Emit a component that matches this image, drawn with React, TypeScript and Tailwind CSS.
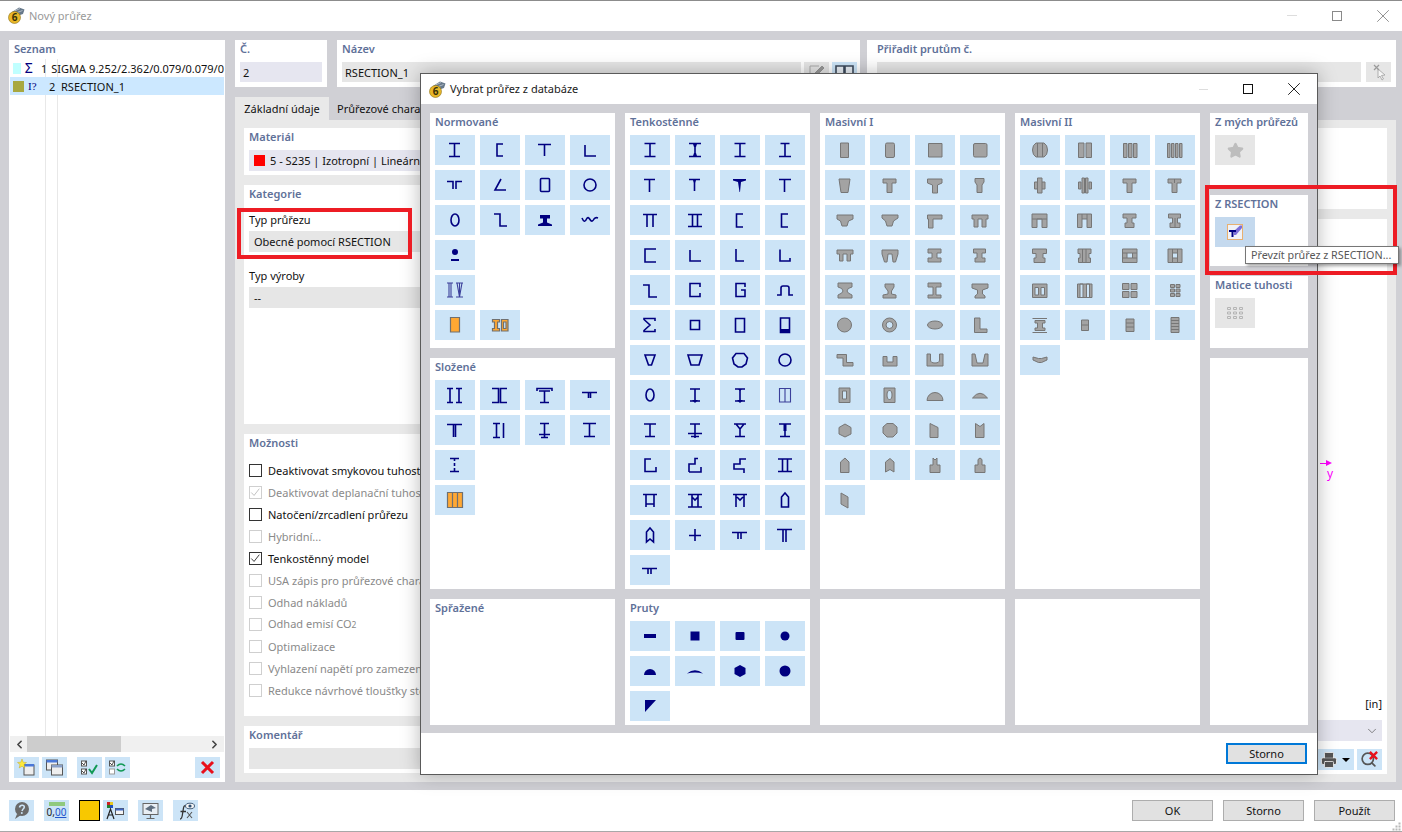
import type { ReactNode } from 'react';
import { ChevronDown, ChevronLeft, ChevronRight, Printer, Search, Star, X } from 'lucide-react';

type Kind = 'n' | 'f' | 'g' | 'o' | 'l';
type Shape = [Kind, string];

const n = (d: string): Shape => ['n', d];
const f = (d: string): Shape => ['f', d];
const g = (d: string): Shape => ['g', d];
const o = (d: string): Shape => ['o', d];
const l = (d: string): Shape => ['l', d];

const circle = (cx: number, cy: number, rx: number, ry = rx) =>
  `M${cx - rx} ${cy}a${rx} ${ry} 0 1 0 ${rx * 2} 0a${rx} ${ry} 0 1 0 ${-rx * 2} 0Z`;

const normovane: Shape[][] = [
  [n('M14 8.5H25M14 21.5H25M19.5 8.5V21.5')],
  [n('M23 9H17V21H23')],
  [n('M13 9.5H26M19.5 9.5V21')],
  [n('M15 10V21H26')],
  [n('M12 11.5H18V19M21 19V11.5H27')],
  [n('M21 9L15 20H26')],
  [n('M16.5 8.5H23.5Q24.5 8.5 24.5 9.5V20.5Q24.5 21.5 23.5 21.5H16.5Q15.5 21.5 15.5 20.5V9.5Q15.5 8.5 16.5 8.5Z')],
  [n(circle(20, 15, 6))],
  [n(circle(20, 15, 4, 6))],
  [n('M14 9H20V21H27')],
  [f('M15 10H25V13.5H22V17.5L27 19.5V21H13V19.5L18 17.5V13.5H15Z')],
  [n('M12 13Q14.5 19 16.5 14Q18 11 20 14.5Q22 18 24 14Q25.5 12 28 13')],
  [f(`${circle(20, 12, 3)}M16 19H24V21H16Z`)],
  [],
  [],
  [],
  [l('M12 8H18M12 22H18M14 8V22M16 8V22M21 8H28M21 22H28M22 8L24.5 22L27 8M24.5 8V22')],
  [],
  [],
  [],
  [o('M15.5 7.5H24.5V22H15.5Z')],
  [o('M12.5 9.5H19.5V12H17.5V18.5H19.5V21H12.5V18.5H14.5V12H12.5ZM21.5 9.5H28V21H21.5ZM23.5 12V18.5H26V12Z')],
];

const slozene: Shape[][] = [
  [n('M12 8.5H18M12 22.5H18M15 8.5V22.5M21 8.5H27M21 22.5H27M24 8.5V22.5')],
  [n('M12 8.5H18.5V22.5H12M27 8.5H20.5V22.5H27')],
  [n('M12 11V8.5H27V11M14 11H25M19.5 11V22.5M15 22.5H24')],
  [n('M12 12.5H27M18.5 12.5V18M20.5 12.5V18')],
  [n('M12 9.5H27M18.5 9.5V22M20.5 9.5V22')],
  [n('M13 8.5H20M13 22.5H20M16.5 8.5V22.5M23.5 8V23')],
  [n('M15 8.5H24M19.5 8.5V22.5M14 19.5H25M16 22.5H23')],
  [n('M13 8.5H26M19.5 8.5V21.5M14 21.5H25')],
  [n('M15 8.5H24M15 21.5H24M19.5 8.5V11M19.5 13V16M19.5 18V21.5')],
  [],
  [],
  [],
  [o('M12.5 7.5H27.5V22.5H12.5ZM17.5 7.5V22.5M22.5 7.5V22.5')],
];

const tenkostenne: Shape[][] = [
  [n('M14.5 8.5H25.5M14.5 21.5H25.5M20 8.5V21.5')],
  [n('M14 8.5H26M14 21.5H26M20 8.5V21.5'), f('M18 9H22L21 12H19ZM19 18H21L22 21H18Z')],
  [n('M14.5 8.5H25.5M14.5 21.5H25.5M20 8.5V21.5')],
  [n('M15.5 8.5H24.5M14 21.5H26M20 8.5V21.5')],
  [n('M14 9.5H25M19.5 9.5V22')],
  [n('M14 9.5H25M19.5 9.5V21'), f('M18 10H21L20 13H19Z')],
  [f('M13 9H26V10.5L21 12L20 22H19.5L18 12L13 10.5Z')],
  [n('M14 9.5H26M19.5 9.5V22')],
  [n('M13 9.5H27M17 9.5V22M23 9.5V22')],
  [n('M13 9.5H27M13 21.5H27M17.5 9.5V21.5M22.5 9.5V21.5')],
  [n('M23 9H16.5V22H23')],
  [n('M23 9H16.5V22H23')],
  [n('M26 9H15V22H26')],
  [n('M15 10V21H26')],
  [n('M16 9V21H24')],
  [n('M15 9.5V21H25V18')],
  [n('M13 10H19V22H27')],
  [n('M25 12V8.5H15V21.5H25V18')],
  [n('M25 12V8.5H16V21.5H25V15H21')],
  [n('M12 20H16V13Q16 11 18 11H22Q24 11 24 13V20H28')],
  [n('M25 11V8.5H14V9.5L20 15L14 20.5V21.5H25V19')],
  [n('M15.5 10.5H24.5V19.5H15.5Z')],
  [n('M15.5 8.5H24.5V22H15.5Z')],
  [n('M15.5 8H24.5V22.5H15.5Z'), f('M15 19H25V23H15Z')],
  [n('M15 10H25L21.5 20H18.5Z')],
  [n('M13 10H27L24 20H16Z')],
  [n('M16 8.5H24L27.5 13L26 19L22 22H18L14 19L12.5 13Z')],
  [n(circle(20, 15, 6))],
  [n(circle(20, 15, 4, 6))],
  [n('M15 9H25M15 21H25M20 9V21'), f('M17 20H23L20 23Z')],
  [n('M15 9H25M15 21H25M20 9V21'), f('M18 9H22L20 11ZM17 20H23L20 23Z')],
  [l('M14.5 8.5H25.5V22H14.5ZM20 8.5V22')],
  [n('M14 9H26M20 9V21.5M15 21.5H25')],
  [n('M15 9H25M20 9V23M13 18.5H27M16 21.5H24')],
  [n('M14 9H26M16 9L20 14L24 9M20 14V21.5M15 21.5H25')],
  [n('M14 9H26M20 9V21.5M15 21.5H25'), f('M18.5 9H21.5V16H18.5Z')],
  [n('M21 9H15V21.5H26V17')],
  [n('M14 22H26V17M14 22V14H20V8.5H23')],
  [n('M26 9H20V14H14V19H24V23')],
  [n('M13 9H27M13 21.5H27M17.5 9V21.5M22.5 9V21.5')],
  [n('M13 9.5H27M16 9.5V22M24 9.5V22M16 19H24')],
  [n('M13 9.5H27M13 22H27M17 9.5V22M23 9.5V22M17 12L20 15L23 12')],
  [n('M13 9.5H27M16 9.5V22M24 9.5V22M17 12L20 15L23 12')],
  [n('M16.5 22V12L20 8L23.5 12V22Z')],
  [n('M16.5 22V12L20 8L23.5 12V22L20 19Z')],
  [n('M14 15.5H26M20 9V21')],
  [n('M12 12.5H27M18 12.5V19M21 12.5V19')],
  [n('M12 9.5H27M18 9.5V22M21 9.5V22')],
  [n('M12 13.5H27M18 13.5V19M21 13.5V19')],
];

const pruty: Shape[][] = [
  [f('M14 13H26V17H14Z')],
  [f('M15.5 10.5H24.5V19.5H15.5Z')],
  [f('M16.5 11H23.5Q24.5 11 24.5 12V18Q24.5 19 23.5 19H16.5Q15.5 19 15.5 18V12Q15.5 11 16.5 11Z')],
  [f(circle(20, 15, 4.5))],
  [f('M14 19A6 6 0 0 1 26 19Z')],
  [f('M12 17.5Q20 11 28 17.5Q20 15.5 12 17.5Z')],
  [f('M20 9L25.5 12V18L20 21L14.5 18V12Z')],
  [f(circle(20, 15, 5.5))],
  [f('M15 9H26L15 21Z')],
];

const masivniI: Shape[][] = [
  [g('M15.5 8H23.5V22.5H15.5Z')],
  [g('M17 8H23Q24.5 8 24.5 9.5V21Q24.5 22.5 23 22.5H17Q15.5 22.5 15.5 21V9.5Q15.5 8 17 8Z')],
  [g('M13.5 8.5H27V22H13.5Z')],
  [g('M15 8.5H25.5Q27 8.5 27 10V20.5Q27 22 25.5 22H15Q13.5 22 13.5 20.5V10Q13.5 8.5 15 8.5Z')],
  [g('M14 9H25L23 22.5H16Z')],
  [g('M13 9H26V13H22V22.5H17V13H13Z')],
  [g('M12.5 9H27V13L22.5 15V23H17.5V15L12.5 13Z')],
  [g('M15 8.5H24V12L22 15V22.5H17V15L15 12Z')],
  [g('M12 10H28V14L23.5 16L22 21H17L15.5 16L12 14Z')],
  [g('M12 10H28V13L23.5 16L22 21H17L15.5 16L12 13Z')],
  [g('M12.5 10H27V14H18V23H13.5V14H12.5Z')],
  [g('M12 10H28V14H26V22H22V14H18V22H14V14H12Z')],
  [g('M12 10H28V14H25.5V21H22V14H18V21H14.5V14H12Z')],
  [g('M12 10H28V14L25.5 22H23L22 14H18L17 22H14.5L12 14Z')],
  [g('M13 9H26V13H22V18H26V22H13V18H17V13H13Z')],
  [g('M13.5 9H25.5V13H22V18H25V22H15V18H17V13H13.5Z')],
  [g('M13 8H27V12Q22 13 22 16Q22 18 27 20V23H13V20Q18 18 18 16Q18 13 13 12Z')],
  [g('M15 9H24V12L21.5 16V19L26 20V23H13V20L18 19V16L15 12Z')],
  [g('M13 8H26V12H21V20H26V23H13V20H18V12H13Z')],
  [g('M12 9H28V13L22.5 15V19L25 21V23H15V21L17.5 19V15L12 13Z')],
  [g(circle(19.5, 15, 7))],
  [g(`${circle(19.5, 15, 7)}${circle(19.5, 15, 3.5)}`)],
  [g(circle(20, 15, 7.5, 4))],
  [g('M14.5 8H20V19H27V22.5H14.5Z')],
  [g('M12 9.5H21.5V17.5H28V21H18V13H12Z')],
  [g('M13 11.5H17V17H23V11.5H27V21H13Z')],
  [g('M12 9H15.5V15Q15.5 18 20 18Q24.5 18 24.5 15V9H28V21H12Z')],
  [g('M12 9H15L17 18H23L25 9H28V21H12Z')],
  [g('M14 8H25V22.5H14ZM17.5 11V19H21.5V11Z')],
  [g(`M14 8H25V22.5H14Z${circle(19.5, 15, 2.5, 4.5)}`)],
  [g('M12 20.5A8 8 0 0 1 28 20.5Z')],
  [g('M12.5 18Q20 8.5 27.5 18Z')],
  [g('M20 9L26 12.5V19L20 22L14 19V12.5Z')],
  [g('M17 8.5H23L27 12V18L23 22H17L13 18V12Z')],
  [g('M15 8.5L23 12.5V22.5H15Z')],
  [g('M15.5 8.5L20 11.5L24 8.5V22.5H15.5Z')],
  [g('M15.5 22.5V12L20 8L24 12V22.5Z')],
  [g('M15.5 22V12L20 8.5L24 12V22L20 19.5Z')],
  [g('M15 22.5V15H18V8L20 10L22 8V15H25V22.5Z')],
  [g('M15 22.5V15H18V9.5L20 8L22 9.5V15H25V22.5Z')],
  [g('M16 8L23 12V23L16 19Z')],
];

const masivniII: Shape[][] = [
  [g('M16 8H24Q27.5 10 27.5 15Q27.5 20 24 22H16Q12.5 20 12.5 15Q12.5 10 16 8ZM17.5 8V22M22.5 8V22')],
  [g('M13.5 8H19V22.5H13.5ZM21 8H26.5V22.5H21Z')],
  [g('M13.5 8.5H17V22.5H13.5ZM18.5 8.5H22V22.5H18.5ZM23.5 8.5H27V22.5H23.5Z')],
  [g('M12.5 8.5H15V22.5H12.5ZM16.5 8.5H19V22.5H16.5ZM20.5 8.5H23V22.5H20.5ZM24.5 8.5H27V22.5H24.5Z')],
  [g('M17.5 8H22V12H25V19H22V23H17.5V19H14.5V12H17.5ZM17.5 12V19M22 12V19')],
  [g('M17 8H19.5V23H17ZM20.5 8H23V23H20.5ZM13.5 12H16V19H13.5ZM24 12H26.5V19H24Z')],
  [g('M13 9H26V13H22V22.5H17V13H13Z')],
  [g('M13 9H26V13H22V22.5H17V13H13ZM19.5 9V13')],
  [g('M12 9H27V22.5H22V14H17V22.5H12ZM12 14H27')],
  [g('M12.5 9H26.5V22.5H22V14H17V22.5H12.5ZM17 9V14M22 9V14')],
  [g('M13 9H26V13H22V18H24V22.5H15V18H17V13H13Z')],
  [g('M13.5 9H25.5V13H22.5V18H25V22.5H15V18H17.5V13H13.5ZM20 13V22.5')],
  [g('M12.5 9H26.5V13.5H23V18H25V22.5H14V18H16V13.5H12.5Z')],
  [g('M13 9H26V13.5H24V18H25.5V22.5H13.5V18H15V13.5H13ZM17.5 9V22.5M21 9V22.5')],
  [g('M12.5 9H27V22.5H12.5ZM17 13H22.5V18H17ZM12.5 13H17M22.5 13H27M12.5 18H17M22.5 18H27')],
  [g('M13 9H27V22.5H13ZM17.5 13H22.5V18H17.5ZM17.5 9V22.5M22.5 9V22.5')],
  [g('M12.5 9H27V22.5H12.5ZM15 12.5V20H18.5V12.5ZM21 12.5V20H24.5V12.5Z')],
  [g('M12.5 9H27V22.5H12.5ZM15 9V22.5H18V9ZM21.5 9V22.5H24.5V9Z')],
  [g('M12.5 8.5H19V14.5H12.5ZM21 8.5H27V14.5H21ZM12.5 16.5H19V22.5H12.5ZM21 16.5H27V22.5H21Z')],
  [g('M15.5 9.5H19.5V12.5H15.5ZM21 9.5H25V12.5H21ZM15.5 14H19.5V17H15.5ZM21 14H25V17H21ZM15.5 18.5H19.5V21.5H15.5ZM21 18.5H25V21.5H21Z')],
  [g('M12.5 8.5H27M12.5 22.5H27M15 10.5H25V13H22.5V18H25V20.5H15V18H17.5V13H15Z')],
  [g('M16.5 10H23.5V20.5H16.5ZM16.5 15H23.5')],
  [g('M16 9H24V21.5H16ZM16 13H24M16 17H24')],
  [g('M16 7.5H24V22.5H16ZM16 10.5H24M16 13.5H24M16 16.5H24M16 19.5H24')],
  [g('M13 12L18.5 13.5H21.5L27 12V15L21.5 17.5H18.5L13 15Z')],
];

function Icon({ shapes }: { shapes: Shape[] }) {
  return (
    <svg viewBox="0 0 40 30" className="h-[30px] w-[40px]">
      {shapes.map(([kind, d], i) => {
        if (kind === 'n') return <path key={i} d={d} fill="none" stroke="#000080" strokeWidth={1.6} />;
        if (kind === 'l') return <path key={i} d={d} fill="none" stroke="#3a3f9a" strokeWidth={1.1} />;
        if (kind === 'f') return <path key={i} d={d} fill="#000080" />;
        if (kind === 'o') return <path key={i} d={d} fill="#ffa833" stroke="#707070" strokeWidth={1.2} fillRule="evenodd" />;
        return <path key={i} d={d} fill="#a3a3a3" stroke="#767676" strokeWidth={1} fillRule="evenodd" />;
      })}
    </svg>
  );
}

function Grid({ items }: { items: Shape[][] }) {
  return (
    <div className="grid grid-cols-[repeat(4,40px)] gap-[5px] pl-[5px]">
      {items.map((shapes, i) =>
        shapes.length ? (
          <div key={i} className="h-[30px] w-[40px] bg-[#cce4f7]">
            <Icon shapes={shapes} />
          </div>
        ) : (
          <div key={i} className="h-[30px] w-[40px]" />
        ),
      )}
    </div>
  );
}

function Heading({ children }: { children: ReactNode }) {
  return (
    <div className="flex h-[22px] items-center px-[5px] pb-[5px] text-[11px] leading-none font-semibold whitespace-nowrap text-[#5f7199]">
      {children}
    </div>
  );
}

function Panel({ title, className, children }: { title?: string; className: string; children?: ReactNode }) {
  return (
    <div className={`bg-white ${className}`}>
      {title && <Heading>{title}</Heading>}
      {children}
    </div>
  );
}

function Logo() {
  return (
    <svg viewBox="0 0 17 17" className="h-[17px] w-[17px] shrink-0">
      <path d="M4 5L11 0.5L16.5 2.5L15 7L9 9Z" fill="#66788a" />
      <path d="M6.5 4L12 1.5M8 6L14.5 3.5" stroke="#c3ccd4" strokeWidth={0.8} />
      <circle cx="6.5" cy="10.5" r="6" fill="#e9b728" stroke="#8a7018" strokeWidth={0.6} />
      <text x="6.5" y="14.2" textAnchor="middle" fontSize="10" fontWeight="700" fill="#3a3208">
        6
      </text>
    </svg>
  );
}

function Check({ on, disabled, label }: { on?: boolean; disabled?: boolean; label: ReactNode }) {
  return (
    <div className="flex h-[22px] items-center whitespace-nowrap">
      <span
        className={`mr-[6px] flex h-[13px] w-[13px] shrink-0 items-center justify-center border bg-white ${
          disabled ? 'border-[#cfcfcf]' : 'border-[#333333]'
        }`}
      >
        {on && (
          <svg viewBox="0 0 13 13" className="h-[11px] w-[11px]">
            <path d="M1.5 6.5L4.8 10L11 2" fill="none" stroke={disabled ? '#bdbdbd' : '#333333'} strokeWidth={1.1} />
          </svg>
        )}
      </span>
      <span className={disabled ? 'text-[#8a8a8a]' : 'text-[#111111]'}>{label}</span>
    </div>
  );
}

function ToolButton({ className = '', children }: { className?: string; children?: ReactNode }) {
  return <div className={`flex h-[21px] w-[25px] items-center justify-center bg-[#cce4f7] ${className}`}>{children}</div>;
}

function WinButton({ children }: { children: ReactNode }) {
  return (
    <div className="flex h-[21px] w-[81px] items-center justify-center border border-[#adadad] bg-[#e1e1e1] text-[#111111]">
      {children}
    </div>
  );
}

function RedBox({ className }: { className: string }) {
  return <div className={`absolute border-[4px] border-[#ed1c24] ${className}`} />;
}

const options = [
  { label: 'Deaktivovat smykovou tuhost' },
  { label: 'Deaktivovat deplanační tuhost', on: true, disabled: true },
  { label: 'Natočení/zrcadlení průřezu' },
  { label: 'Hybridní...', disabled: true },
  { label: 'Tenkostěnný model', on: true },
  { label: 'USA zápis pro průřezové charakteristiky', disabled: true },
  { label: 'Odhad nákladů', disabled: true },
  {
    label: (
      <>
        Odhad emisí CO<span className="text-[8.5px]">2</span>
      </>
    ),
    disabled: true,
  },
  { label: 'Optimalizace', disabled: true },
  { label: 'Vyhlazení napětí pro zamezení singularit', disabled: true },
  { label: 'Redukce návrhové tloušťky stěny', disabled: true },
];

export default function App() {
  return (
    <div className="relative flex h-[832px] w-[1402px] flex-col overflow-hidden bg-white text-[11px] leading-none text-[#111111] [font-family:'Noto_Sans',sans-serif]">
      {/* Title bar */}
      <div className="flex h-[31px] shrink-0 items-center border-t border-[#8c8c8c] pb-[1px] pl-[8px]">
        <Logo />
        <span className="ml-[4px] pb-[1px] text-[#999999]">Nový průřez</span>
        <div className="ml-auto flex items-center pr-[8px]">
          <div className="mr-[35px] h-px w-[10px] bg-[#dddddd]" />
          <div className="mr-[30px] h-[10px] w-[10px] border border-[#8a8a8a]" />
          <X className="h-[22px] w-[22px] text-[#8a8a8a]" strokeWidth={1} />
        </div>
      </div>

      {/* Main body */}
      <div className="flex min-h-0 flex-1 gap-[10px] bg-[#d0d0d5] pt-[9px] pr-[6px] pb-[8px] pl-[9px]">
        <div className="flex w-[216px] shrink-0 flex-col bg-white">
          <Heading>Seznam</Heading>
          <div className="relative mx-px -mt-[3px] flex min-h-0 flex-1 flex-col">
            <div className="absolute top-0 bottom-0 left-[35px] w-px bg-[#e8e8e8]" />
            <div className="absolute top-0 bottom-0 left-[47px] w-px bg-[#e8e8e8]" />
            <div className="relative flex h-[18px] items-center">
              <span className="ml-[3px] h-[11px] w-[11px] bg-[#c0ffff]" />
              <span className="ml-[4px] w-[17px] text-[14px] text-[#000080]">Σ</span>
              <span className="ml-[4px] w-[8px]">1</span>
              <span className="ml-[4px] whitespace-nowrap">SIGMA 9.252/2.362/0.079/0.079/0</span>
            </div>
            <div className="relative flex h-[18px] items-center bg-[#cce8ff]">
              <span className="ml-[3px] h-[11px] w-[11px] bg-[#a8a840]" />
              <span className="ml-[4px] w-[17px] text-[11px] text-[#000080] [font-family:'Liberation_Serif',serif]">I?</span>
              <span className="ml-[4px] w-[8px]">2</span>
              <span className="ml-[4px] whitespace-nowrap">RSECTION_1</span>
            </div>
          </div>
          <div className="mx-px flex h-[16px] items-center bg-[#f0f0f0]">
            <ChevronLeft className="ml-[3px] h-[13px] w-[13px] text-[#444444]" strokeWidth={3} />
            <div className="ml-[1px] h-full w-[94px] bg-[#cdcdcd]" />
            <ChevronRight className="mr-[3px] ml-auto h-[13px] w-[13px] text-[#444444]" strokeWidth={3} />
          </div>
          <div className="flex h-[30px] items-center pl-[5px]">
            <ToolButton>
              <svg viewBox="0 0 25 21" className="h-[21px] w-[25px]">
                <rect x="10" y="8" width="10" height="10" fill="#eeeeee" stroke="#555555" />
                <rect x="10" y="7" width="10" height="2.5" fill="#4a78d8" />
                <path d="M8 2L9.2 5.2L12.5 5.5L10 7.6L10.8 11L8 9.2L5.2 11L6 7.6L3.5 5.5L6.8 5.2Z" fill="#ffe93b" stroke="#b59a10" strokeWidth={0.4} />
              </svg>
            </ToolButton>
            <ToolButton className="ml-[3px]">
              <svg viewBox="0 0 25 21" className="h-[21px] w-[25px]">
                <rect x="4.5" y="3" width="11" height="10" fill="#eeeeee" stroke="#555555" />
                <rect x="9.5" y="8" width="11" height="10" fill="#eeeeee" stroke="#555555" />
                <rect x="4.5" y="3" width="11" height="2.5" fill="#4a78d8" />
                <rect x="9.5" y="8" width="11" height="2.5" fill="#8aa0c8" />
              </svg>
            </ToolButton>
            <ToolButton className="ml-[10px]">
              <svg viewBox="0 0 25 21" className="h-[21px] w-[25px]">
                <rect x="4.5" y="4" width="5" height="5" fill="#fff" stroke="#555555" />
                <rect x="4.5" y="12" width="5" height="5" fill="#fff" stroke="#555555" />
                <path d="M5 6L7 8L9 4M5 14L7 16L9 12" fill="none" stroke="#222222" strokeWidth={0.8} />
                <path d="M12 12L15 16L20 8" fill="none" stroke="#119955" strokeWidth={2} />
              </svg>
            </ToolButton>
            <ToolButton className="ml-[3px]">
              <svg viewBox="0 0 25 21" className="h-[21px] w-[25px]">
                <rect x="4.5" y="4" width="5" height="5" fill="#fff" stroke="#555555" />
                <rect x="4.5" y="12" width="5" height="5" fill="#fff" stroke="#999999" />
                <path d="M5 6L7 8L9 4" fill="none" stroke="#222222" strokeWidth={0.8} />
                <path d="M12 9Q16 5 20 9M20 12Q16 16 12 12" fill="none" stroke="#119955" strokeWidth={1.6} />
              </svg>
            </ToolButton>
            <ToolButton className="ml-[65px]">
              <svg viewBox="0 0 25 21" className="h-[21px] w-[25px]">
                <path d="M7 5L18 16M18 5L7 16" stroke="#e8101c" strokeWidth={3} />
              </svg>
            </ToolButton>
          </div>
        </div>

        <div className="flex min-w-0 flex-1 flex-col">
          <div className="flex h-[47px] shrink-0">
            <div className="w-[92px] bg-white">
              <Heading>Č.</Heading>
              <div className="mx-[5px] flex h-[20px] items-center bg-[#e6e6f0] pl-[3px]">2</div>
            </div>
            <div className="ml-[10px] w-[523px] bg-white">
              <Heading>Název</Heading>
              <div className="flex pr-[3px] pl-[5px]">
                <div className="flex h-[20px] flex-1 items-center bg-[#e6e6e6] pl-[3px]">RSECTION_1</div>
                <div className="ml-[3px] flex h-[20px] w-[25px] items-center justify-center bg-[#e6e6e6]">
                  <svg viewBox="0 0 25 20" className="h-[20px] w-[25px]">
                    <path d="M6 4H15M6 4V17H15" fill="none" stroke="#aaaaaa" />
                    <path d="M9 13L18 4L20 6L11 15Z" fill="#9a9a9a" stroke="#777777" strokeWidth={0.6} />
                  </svg>
                </div>
                <div className="ml-[3px] flex h-[20px] w-[25px] items-center justify-center bg-[#cce4f7]">
                  <svg viewBox="0 0 25 20" className="h-[20px] w-[25px]">
                    <path d="M4 4H12V16H4ZM13 4H21V16H13Z" fill="#e8eef4" stroke="#3c4a5c" strokeWidth={1.6} />
                  </svg>
                </div>
              </div>
            </div>
            <div className="ml-[7px] flex-1 bg-white">
              <Heading>
                <span className="pl-[5px]">Přiřadit prutům č.</span>
              </Heading>
              <div className="flex pr-[5px] pl-[10px]">
                <div className="h-[20px] flex-1 bg-[#e6e6e6]" />
                <div className="ml-[5px] flex h-[20px] w-[25px] items-center justify-center bg-[#e6e6e6]">
                  <svg viewBox="0 0 25 20" className="h-[20px] w-[25px]">
                    <path d="M12 7L19 13L15.5 13.5L17.5 17L16 18L14 14L12 16Z" fill="#f5f5f5" stroke="#a0a0a0" strokeWidth={0.8} />
                    <path d="M8 3L13 8M13 3L8 8" stroke="#9a9a9a" strokeWidth={1.2} />
                  </svg>
                </div>
              </div>
            </div>
          </div>

          <div className="mt-[10px] flex h-[23px] shrink-0">
            <div className="flex w-[94px] items-center justify-center bg-[#e9e9e9]">Základní údaje</div>
            <div className="flex items-center pl-[8px] whitespace-nowrap">Průřezové charakteristiky</div>
          </div>

          <div className="flex min-h-0 flex-1 gap-[10px] bg-[#e9e9e9] px-[9px] py-[8px]">
            <div className="flex w-[556px] shrink-0 flex-col gap-[10px]">
              <Panel title="Materiál" className="h-[47px]">
                <div className="mx-[5px] flex h-[21px] items-center bg-[#e6e6f0] pl-[5px]">
                  <span className="mr-[5px] h-[11px] w-[11px] bg-[#ff0000]" />
                  5 - S235 | Izotropní | Lineárně elastický
                </div>
              </Panel>
              <Panel title="Kategorie" className="h-[239px]">
                <div className="px-[5px]">
                  <div className="mt-[6px] flex h-[13px] items-center">Typ průřezu</div>
                  <div className="mt-[5px] flex h-[21px] items-center bg-[#e6e6e6] pl-[5px]">Obecné pomocí RSECTION</div>
                  <div className="mt-[17px] flex h-[13px] items-center">Typ výroby</div>
                  <div className="mt-[5px] flex h-[21px] items-center bg-[#e6e6e6] pl-[5px]">--</div>
                </div>
              </Panel>
              <Panel title="Možnosti" className="h-[282px]">
                <div className="mt-[3px] px-[5px]">
                  {options.map((opt, i) => (
                    <Check key={i} on={opt.on} disabled={opt.disabled} label={opt.label} />
                  ))}
                </div>
              </Panel>
              <Panel title="Komentář" className="h-[47px]">
                <div className="mx-[5px] h-[21px] bg-[#e6e6e6]" />
              </Panel>
            </div>
            <div className="flex min-w-0 flex-1 flex-col gap-[10px]">
              <div className="h-[81px] bg-white" />
              <div className="relative flex min-h-0 flex-1 flex-col justify-end bg-white px-[5px] pb-[4px]">
                <div className="absolute top-[241px] left-[510px] flex flex-col text-[#ff00ff]">
                  <div className="flex items-center">
                    <span className="h-px w-[6px] bg-[#ff00ff]" />
                    <span className="h-0 w-0 border-y-[3px] border-l-[6px] border-y-transparent border-l-[#ff00ff]" />
                  </div>
                  <span className="mt-[2px] ml-[7px] text-[12px]">y</span>
                </div>
                <div className="text-right">[in]</div>
                <div className="mt-[11px] flex h-[21px] items-center justify-end bg-[#e6e6f0] pr-[3px]">
                  <ChevronDown className="h-[14px] w-[14px] text-[#555555]" strokeWidth={1.2} />
                </div>
                <div className="mt-[8px] flex justify-end gap-[3px]">
                  <div className="flex h-[21px] w-[56px] items-center justify-end gap-[4px] bg-[#cce4f7] pr-[4px]">
                    <Printer className="h-[18px] w-[18px]" fill="#555555" stroke="#ffffff" strokeWidth={1} />
                    <span className="h-0 w-0 border-x-[4px] border-t-[4px] border-x-transparent border-t-black" />
                  </div>
                  <div className="relative flex h-[21px] w-[25px] items-center justify-start bg-[#cce4f7] pl-[3px]">
                    <Search className="h-[17px] w-[17px] text-[#555555]" strokeWidth={2.4} />
                    <svg viewBox="0 0 10 10" className="absolute top-[2px] right-[4px] h-[9px] w-[9px]">
                      <path d="M1 1L9 9M9 1L1 9" stroke="#e8101c" strokeWidth={2.6} />
                    </svg>
                  </div>
                </div>
              </div>
            </div>
          </div>
        </div>
      </div>

      {/* Footer */}
      <div className="relative flex h-[42px] shrink-0 items-center border-b border-[#a8a8a8] pr-[7px] pb-[1px] pl-[9px]">
        <ToolButton>
          <svg viewBox="0 0 25 21" className="h-[21px] w-[25px]">
            <circle cx="13" cy="9" r="7" fill="#6a6a6a" />
            <path d="M8 14L6 19L12 15Z" fill="#6a6a6a" />
            <path d="M10.5 7.5Q11 5 13.5 5.3Q16 5.8 15 8Q13.5 9.5 13 11" fill="none" stroke="#cce4f7" strokeWidth={1.6} />
            <circle cx="12.8" cy="13" r="1" fill="#cce4f7" />
          </svg>
        </ToolButton>
        <ToolButton className="ml-[10px] flex-col">
          <span className="mb-[1px] h-[4px] w-[16px] bg-[#8fc97e]" />
          <span className="text-[10px] leading-[11px] text-[#222222]">
            0,<span className="text-[#2255cc] underline">00</span>
          </span>
        </ToolButton>
        <div className="ml-[10px] h-[21px] w-[21px] border border-black bg-[#f8c800]" />
        <ToolButton className="ml-[3px]">
          <svg viewBox="0 0 25 21" className="h-[21px] w-[25px]">
            <rect x="4" y="2" width="3" height="3" fill="#d02020" />
            <rect x="7" y="2" width="3" height="3" fill="#e8c820" />
            <rect x="4" y="5" width="3" height="3" fill="#208030" />
            <rect x="7" y="5" width="3" height="3" fill="#2050c0" />
            <path d="M4 19L7.5 9L11 19M5.5 15H9.5" fill="none" stroke="#222222" strokeWidth={1.2} />
            <rect x="12.5" y="8.5" width="8" height="6" fill="#f5f5f5" stroke="#555555" />
            <rect x="12.5" y="8.5" width="8" height="2" fill="#3f66c4" />
          </svg>
        </ToolButton>
        <ToolButton className="ml-[10px]">
          <svg viewBox="0 0 25 21" className="h-[21px] w-[25px]">
            <rect x="5" y="3.5" width="15" height="11" fill="#e8eef4" stroke="#666666" />
            <path d="M7 9L13 5L18 8L14 9L14 12Z" fill="#5f6f80" />
            <path d="M12.5 15V18M8.5 18.5H16.5" stroke="#666666" strokeWidth={1.2} />
          </svg>
        </ToolButton>
        <ToolButton className="ml-[10px]">
          <svg viewBox="0 0 25 21" className="h-[21px] w-[25px]">
            <path d="M7 19Q9 19 9.5 14L10.5 8Q11 5 13 6M7.5 11.5H13" fill="none" stroke="#333333" strokeWidth={1.3} />
            <path d="M14 12L19 18M19 12L14 18" stroke="#555555" strokeWidth={1.1} />
            <ellipse cx="17" cy="6" rx="4.5" ry="2.8" fill="#f5f5f5" stroke="#47607c" />
            <circle cx="17" cy="6" r="1.6" fill="#2c4d72" />
          </svg>
        </ToolButton>
        <div className="ml-auto flex gap-[10px]">
          <WinButton>OK</WinButton>
          <WinButton>Storno</WinButton>
          <WinButton>Použít</WinButton>
        </div>
        <svg viewBox="0 0 9 9" className="absolute right-px bottom-0 h-[9px] w-[9px]">
          <path d="M6.5 .5h2v2h-2zM3.5 3.5h2v2h-2zM6.5 3.5h2v2h-2zM.5 6.5h2v2h-2zM3.5 6.5h2v2h-2zM6.5 6.5h2v2h-2z" fill="#b8b8b8" />
        </svg>
      </div>

      {/* Modal dialog */}
      <div className="absolute top-[73px] left-[420px] flex h-[702px] w-[898px] flex-col border border-[#5a5a5a] bg-white shadow-[0_0_18px_rgba(0,0,0,0.28)]">
        <div className="flex h-[30px] shrink-0 items-center pl-[8px]">
          <Logo />
          <span className="ml-[4px] pb-[2px] text-[#1a1a1a]">Vybrat průřez z databáze</span>
          <div className="ml-auto flex items-center pr-[12px]">
            <div className="mr-[35px] h-px w-[9px] bg-[#dddddd]" />
            <div className="mr-[30px] h-[10px] w-[10px] border border-[#111111]" />
            <X className="h-[22px] w-[22px] text-[#111111]" strokeWidth={1} />
          </div>
        </div>
        <div className="grid h-[629px] shrink-0 grid-cols-[185px_185px_185px_185px_98px] gap-[10px] bg-[#d0d0d5] px-[9px] pt-[9px] pb-[8px]">
          <div className="flex flex-col gap-[10px]">
            <Panel title="Normované" className="h-[235px]">
              <Grid items={normovane} />
            </Panel>
            <Panel title="Složené" className="h-[231px]">
              <Grid items={slozene} />
            </Panel>
            <Panel title="Spřažené" className="h-[126px]" />
          </div>
          <div className="flex flex-col gap-[10px]">
            <Panel title="Tenkostěnné" className="h-[476px]">
              <Grid items={tenkostenne} />
            </Panel>
            <Panel title="Pruty" className="h-[126px]">
              <Grid items={pruty} />
            </Panel>
          </div>
          <div className="flex flex-col gap-[10px]">
            <Panel title="Masivní I" className="h-[476px]">
              <Grid items={masivniI} />
            </Panel>
            <Panel className="h-[126px]" />
          </div>
          <div className="flex flex-col gap-[10px]">
            <Panel title="Masivní II" className="h-[476px]">
              <Grid items={masivniII} />
            </Panel>
            <Panel className="h-[126px]" />
          </div>
          <div className="flex flex-col gap-[10px]">
            <Panel title="Z mých průřezů" className="h-[72px]">
              <div className="ml-[5px] flex h-[30px] w-[40px] items-center justify-center bg-[#e6e6e6]">
                <Star className="h-[17px] w-[17px] text-[#bdbdbd]" fill="#bdbdbd" />
              </div>
            </Panel>
            <Panel title="Z RSECTION" className="h-[71px]">
              <div className="ml-[5px] flex h-[30px] w-[40px] items-center justify-center bg-[#c4d9ee]">
                <svg viewBox="0 0 16 16" className="h-[16px] w-[16px]">
                  <rect x="0.5" y="0.5" width="15" height="15" fill="#f0f2f8" stroke="#e8b070" />
                  <path d="M7 7L13 1.5H15V4L9 11H7Z" fill="#7d6fd8" />
                  <path d="M2 6H9V8H6.5V13H4.5V8H2Z" fill="#000080" />
                </svg>
              </div>
            </Panel>
            <Panel title="Matice tuhosti" className="h-[72px]">
              <div className="ml-[5px] flex h-[30px] w-[40px] items-center justify-center bg-[#e6e6e6]">
                <svg viewBox="0 0 16 12" className="h-[12px] w-[16px]">
                  <path d="M.5 .5h3v2h-3zM6.5 .5h3v2h-3zM12.5 .5h3v2h-3zM.5 5h3v2h-3zM6.5 5h3v2h-3zM12.5 5h3v2h-3zM.5 9.5h3v2h-3zM6.5 9.5h3v2h-3zM12.5 9.5h3v2h-3z" fill="none" stroke="#b5b5b5" />
                </svg>
              </div>
            </Panel>
            <Panel className="h-[367px]" />
          </div>
        </div>
        <div className="flex flex-1 items-center justify-end pr-[10px]">
          <div className="flex h-[21px] w-[81px] items-center justify-center border-2 border-[#0078d7] bg-[#e1e1e1]">Storno</div>
        </div>
      </div>

      {/* Highlights and tooltip */}
      <RedBox className="top-[208px] left-[237px] h-[51px] w-[175px]" />
      <RedBox className="top-[185px] left-[1205px] h-[90px] w-[192px]" />
      <div className="absolute top-[246px] left-[1245px] flex h-[18px] w-[154px] items-center border border-[#767676] bg-white pl-[5px] text-[10.75px] whitespace-nowrap text-[#575757] shadow-[2px_2px_3px_rgba(0,0,0,0.35)]">
        Převzít průřez z RSECTION...
      </div>
    </div>
  );
}
